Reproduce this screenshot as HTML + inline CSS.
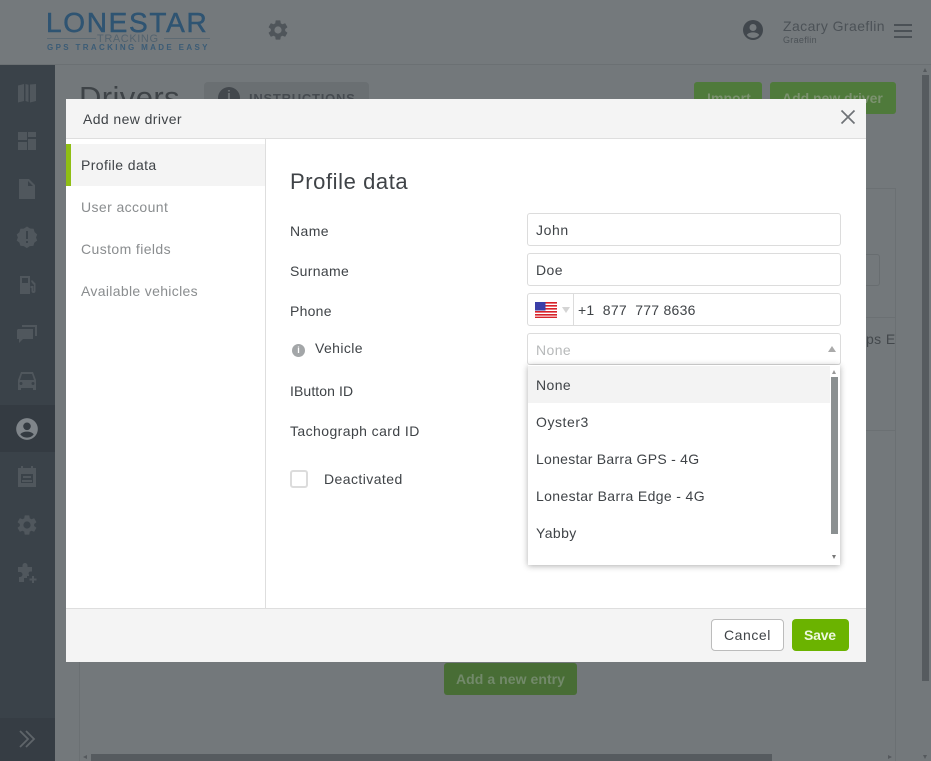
<!DOCTYPE html>
<html><head><meta charset="utf-8"><title>Add new driver</title>
<style>
*{box-sizing:border-box}
html,body{margin:0;padding:0;width:931px;height:761px;overflow:hidden;background:#73787b;font-family:"Liberation Sans",sans-serif;color:#3f4347}
.a{position:absolute}
.t{position:absolute;white-space:nowrap;font-size:14px;line-height:20px;letter-spacing:.4px}
.inp{position:absolute;left:527px;width:314px;height:33px;background:#fff;border:1px solid #dcdcdc;border-radius:3px}
svg{position:absolute;display:block}
.si{fill:#50575d}
</style></head><body>
<!-- background page -->
<div class="a" style="left:0;top:0;width:931px;height:65px;background:#74797c;border-bottom:1px solid #6b7073"></div>
<div class="t" style="left:46px;top:9px;font-size:28px;line-height:28px;letter-spacing:1.7px;color:#2f5472;-webkit-text-stroke:.5px #2f5472">LONESTAR</div>
<div class="a" style="left:47px;top:38px;width:49px;height:1px;background:#5d6a73"></div>
<div class="a" style="left:164px;top:38px;width:46px;height:1px;background:#5d6a73"></div>
<div class="t" style="left:97px;top:33px;font-size:11px;line-height:13px;letter-spacing:.6px;color:#53636f">TRACKING</div>
<div class="t" style="left:47px;top:43px;font-size:8px;line-height:9px;letter-spacing:2.35px;font-weight:bold;color:#3c5c76">GPS TRACKING MADE EASY</div>
<svg style="left:266px;top:18px" width="24" height="24" viewBox="0 0 24 24"><path fill="#4f555a" d="M19.14 12.94c.04-.3.06-.61.06-.94s-.02-.64-.07-.94l2.03-1.58a.49.49 0 0 0 .12-.61l-1.92-3.32a.49.49 0 0 0-.59-.22l-2.39.96a7 7 0 0 0-1.62-.94l-.36-2.54a.48.48 0 0 0-.48-.41h-3.84a.48.48 0 0 0-.47.41l-.36 2.54c-.59.24-1.13.57-1.62.94l-2.39-.96a.48.48 0 0 0-.59.22L2.73 8.87a.48.48 0 0 0 .12.61l2.03 1.58c-.05.3-.08.62-.08.94s.02.64.07.94l-2.03 1.58a.49.49 0 0 0-.12.61l1.92 3.32c.12.22.37.29.59.22l2.39-.96c.5.38 1.03.7 1.62.94l.36 2.54c.05.24.24.41.48.41h3.84c.24 0 .44-.17.47-.41l.36-2.54c.59-.24 1.13-.56 1.62-.94l2.39.96c.22.08.47 0 .59-.22l1.92-3.32a.48.48 0 0 0-.12-.61zM12 15.6a3.6 3.6 0 1 1 0-7.2 3.6 3.6 0 0 1 0 7.2z"/></svg>
<svg style="left:741px;top:18px" width="24" height="24" viewBox="0 0 24 24"><path fill="#41474d" d="M12 2a10 10 0 1 0 0 20 10 10 0 0 0 0-20zm0 4a3.5 3.5 0 1 1 0 7 3.5 3.5 0 0 1 0-7zm0 14a8 8 0 0 1-6.2-3c.8-1.7 3.700-2.600 6.200-2.600s5.400.9 6.200 2.600A8 8 0 0 1 12 20z"/></svg>
<div class="t" style="left:783px;top:16px;color:#4c5257;letter-spacing:.42px">Zacary Graeflin</div>
<div class="t" style="left:783px;top:34px;font-size:9px;line-height:12px;color:#4c5257;letter-spacing:.3px">Graeflin</div>
<div class="a" style="left:894px;top:24px;width:18px;height:2px;background:#4b5156"></div>
<div class="a" style="left:894px;top:30px;width:18px;height:2px;background:#4b5156"></div>
<div class="a" style="left:894px;top:36px;width:18px;height:2px;background:#4b5156"></div>

<div class="a" style="left:0;top:65px;width:55px;height:696px;background:#3a4249"></div>
<div class="a" style="left:0;top:405px;width:55px;height:47px;background:#343b42"></div>
<div class="a" style="left:0;top:718px;width:55px;height:43px;background:#363d44"></div>
<svg style="left:15px;top:81px" width="24" height="24" viewBox="0 0 24 24"><path class="si" d="M3 4.500 9 3v17l-6 1.500zM15 3.500l6-.5v17l-6 1.500zM10.500 3l3 .8v17.200l-3-1z"/></svg>
<svg style="left:15px;top:129px" width="24" height="24" viewBox="0 0 24 24"><path class="si" d="M3 3h9v8H3zM13 3h8v5h-8zM13 10h8v11h-8zM3 13h9v8H3z"/></svg>
<svg style="left:15px;top:177px" width="24" height="24" viewBox="0 0 24 24"><path class="si" d="M5 2h9l6 6v14H4V2zm8 2v5h5z" fill-rule="evenodd"/></svg>
<svg style="left:15px;top:225px" width="24" height="24" viewBox="0 0 24 24"><path class="si" fill-rule="evenodd" d="M12 1.500l3 2 3.600.2 1 3.400 2.600 2.400-1.200 3 1.200 3-2.900 2.200-.9 3.200-3.600.2-3 2-3-2-3.400-.3-1-3.200-2.700-2.100 1.200-3-1.200-3 2.700-2.300 1-3.400 3.400-.2zM11 6v8h2V6zm0 10v2h2v-2z"/></svg>
<svg style="left:15px;top:273px" width="24" height="24" viewBox="0 0 24 24"><path class="si" fill-rule="evenodd" d="M5 3h10v18H5zM7 5v5h6V5zM16 8l1-1 3.500 3.500V18a2 2 0 0 1-4 0v-3h-1v-2h3v5h.5v-6l-2-2z"/></svg>
<svg style="left:15px;top:321px" width="24" height="24" viewBox="0 0 24 24"><path class="si" d="M3 8h15v10H8l-4 4v-4H2V9zM7 4h15v11h-2V6H7z"/></svg>
<svg style="left:15px;top:369px" width="24" height="24" viewBox="0 0 24 24"><path class="si" fill-rule="evenodd" d="M6 3h12l3 8v10h-3v-2H6v2H3V11zM7 5l-2 6h14l-2-6zM6 13a1.500 1.500 0 1 0 0 3 1.500 1.500 0 0 0 0-3zm12 0a1.500 1.500 0 1 0 0 3 1.500 1.500 0 0 0 0-3z"/></svg>
<svg style="left:14px;top:416px" width="26" height="26" viewBox="0 0 24 24"><path fill="#7f858a" d="M12 2a10 10 0 1 0 0 20 10 10 0 0 0 0-20zm0 4a3.500 3.500 0 1 1 0 7 3.500 3.500 0 0 1 0-7zm0 14a8 8 0 0 1-6.200-3c.8-1.700 3.700-2.600 6.200-2.600s5.400.9 6.200 2.600A8 8 0 0 1 12 20z"/></svg>
<svg style="left:15px;top:465px" width="24" height="24" viewBox="0 0 24 24"><path class="si" fill-rule="evenodd" d="M6 1h2v2h8V1h2v2h3v19H3V3h3zM6 9v9h12V9zM8 11h8v2H8zM7 15h10v2H7z"/></svg>
<svg style="left:15px;top:513px" width="24" height="24" viewBox="0 0 24 24"><path class="si" d="M19.140 12.940c.04-.3.06-.61.06-.94s-.02-.64-.07-.94l2.030-1.580a.49.49 0 0 0 .12-.61l-1.920-3.320a.49.49 0 0 0-.59-.22l-2.390.96a7 7 0 0 0-1.620-.94l-.36-2.540a.48.48 0 0 0-.48-.41h-3.840a.48.48 0 0 0-.47.41l-.36 2.540c-.59.24-1.130.57-1.620.94l-2.390-.96a.48.48 0 0 0-.59.22L2.730 8.870a.48.48 0 0 0 .12.61l2.030 1.580c-.05.3-.08.62-.08.94s.02.64.07.94l-2.030 1.580a.49.49 0 0 0-.12.61l1.920 3.320c.12.22.37.29.59.22l2.390-.96c.5.38 1.030.7 1.620.94l.36 2.540c.05.24.24.41.48.41h3.840c.24 0 .44-.17.47-.41l.36-2.540c.59-.24 1.130-.56 1.620-.94l2.390.96c.22.08.47 0 .59-.22l1.920-3.320a.48.48 0 0 0-.12-.61zM12 15.600a3.600 3.600 0 1 1 0-7.200 3.600 3.600 0 0 1 0 7.200z"/></svg>
<svg style="left:15px;top:561px" width="24" height="24" viewBox="0 0 24 24"><path class="si" d="M10 2a2.500 2.500 0 0 1 2.500 2.500V6H17v4.500h-1.500a2 2 0 0 0-1.500 3.300V15h-2v2H9v4H4v-5h1a2.500 2.500 0 0 0 0-5H3V6h4.500V4.500A2.500 2.500 0 0 1 10 2zM17 15h2v2.500h2.500v2H19V22h-2v-2.500h-2.500v-2H17z"/></svg>
<svg style="left:18px;top:729px" width="20" height="20" viewBox="0 0 20 20"><path fill="none" stroke="#5f656a" stroke-width="1.800" d="M2 2l8 8-8 8M8 2l8 8-8 8"/></svg>

<div class="t" style="left:79px;top:78px;font-size:31px;line-height:40px;color:#3e4347">Drivers</div>
<div class="a" style="left:204px;top:82px;width:165px;height:30px;background:#6a6f72;border-radius:4px"></div>
<div class="a" style="left:218px;top:87px;width:22px;height:22px;border-radius:50%;background:#43484d;color:#6a6f72;font:bold 15px/20px 'Liberation Sans',sans-serif;text-align:center">i</div>
<div class="t" style="left:249px;top:89px;font-size:13px;font-weight:bold;color:#464b50;letter-spacing:.75px">INSTRUCTIONS</div>
<div class="a" style="left:694px;top:82px;width:68px;height:32px;background:#4f7a3b;border-radius:3px"></div>
<div class="a" style="left:770px;top:82px;width:126px;height:32px;background:#4f7a3b;border-radius:3px"></div>
<div class="t" style="left:707px;top:88px;color:#7c9270;font-weight:bold;letter-spacing:.05px">Import</div>
<div class="t" style="left:782px;top:88px;color:#7c9270;font-weight:bold;letter-spacing:-.02px">Add new driver</div>
<div class="a" style="left:79px;top:188px;width:817px;height:573px;border:1px solid #6b7073;border-bottom:0"></div>
<div class="a" style="left:866px;top:317px;width:30px;height:1px;background:#6b7073"></div>
<div class="a" style="left:866px;top:430px;width:30px;height:1px;background:#6b7073"></div>
<div class="a" style="left:866px;top:254px;width:14px;height:32px;border:1px solid #686d70;border-left:0;border-radius:0 3px 3px 0"></div>
<div class="t" style="left:866px;top:329px;color:#43484c;width:30px;overflow:hidden">ps Ec</div>
<div class="a" style="left:444px;top:663px;width:133px;height:32px;background:#486d35;border-radius:3px"></div>
<div class="t" style="left:456px;top:669px;color:#72896a;font-weight:bold;letter-spacing:.06px">Add a new entry</div>
<div class="a" style="left:922px;top:75px;width:7px;height:606px;background:#565b5f"></div>
<div class="a" style="left:923px;top:68px;width:0;height:0;border-left:2.500px solid transparent;border-right:2.500px solid transparent;border-bottom:4px solid #55595d"></div>
<div class="a" style="left:923px;top:755px;width:0;height:0;border-left:2.500px solid transparent;border-right:2.500px solid transparent;border-top:4px solid #55595d"></div>
<div class="a" style="left:91px;top:754px;width:681px;height:7px;background:#565b5f"></div>
<div class="a" style="left:83px;top:755px;width:0;height:0;border-top:2.500px solid transparent;border-bottom:2.500px solid transparent;border-right:4px solid #55595d"></div>
<div class="a" style="left:888px;top:755px;width:0;height:0;border-top:2.500px solid transparent;border-bottom:2.500px solid transparent;border-left:4px solid #55595d"></div>

<!-- modal -->
<div class="a" style="left:66px;top:99px;width:800px;height:563px;background:#fff"></div>
<div class="a" style="left:66px;top:99px;width:800px;height:40px;background:#f4f4f4;border-bottom:1px solid #dedede"></div>
<div class="t" style="left:83px;top:109px">Add new driver</div>
<svg style="left:840px;top:109px" width="16" height="16" viewBox="0 0 16 16"><path fill="none" stroke="#6e7276" stroke-width="1.700" d="M1.500 1.500l13 13M14.500 1.500l-13 13"/></svg>
<div class="a" style="left:265px;top:139px;width:1px;height:469px;background:#dedede"></div>
<div class="a" style="left:66px;top:144px;width:199px;height:42px;background:#f4f4f4"></div>
<div class="a" style="left:66px;top:144px;width:5px;height:42px;background:#8fbe14"></div>
<div class="t" style="left:81px;top:155px">Profile data</div>
<div class="t" style="left:81px;top:197px;color:#8a8d8f">User account</div>
<div class="t" style="left:81px;top:239px;color:#8a8d8f">Custom fields</div>
<div class="t" style="left:81px;top:281px;color:#8a8d8f;letter-spacing:.33px">Available vehicles</div>

<div class="t" style="left:290px;top:168px;font-size:22px;line-height:28px;letter-spacing:.58px">Profile data</div>
<div class="t" style="left:290px;top:221px">Name</div>
<div class="t" style="left:290px;top:261px;letter-spacing:.32px">Surname</div>
<div class="t" style="left:290px;top:301px;letter-spacing:.25px">Phone</div>
<div class="a" style="left:292px;top:344px;width:13px;height:13px;border-radius:50%;background:#a3a6a8;color:#fff;font:bold 9px/13px 'Liberation Sans',sans-serif;text-align:center">i</div>
<div class="t" style="left:315px;top:338px">Vehicle</div>
<div class="t" style="left:290px;top:381px;letter-spacing:.1px">IButton ID</div>
<div class="t" style="left:290px;top:421px;letter-spacing:.42px">Tachograph card ID</div>
<div class="a" style="left:290px;top:470px;width:18px;height:18px;border:2px solid #dcdcdc;border-radius:3px;background:#fff"></div>
<div class="t" style="left:324px;top:469px;letter-spacing:.43px">Deactivated</div>

<div class="inp" style="top:213px"></div><div class="t" style="left:536px;top:220px;letter-spacing:.6px">John</div>
<div class="inp" style="top:253px"></div><div class="t" style="left:536px;top:260px">Doe</div>
<div class="inp" style="top:293px"></div>
<div class="a" style="left:573px;top:294px;width:1px;height:31px;background:#dcdcdc"></div>
<svg style="left:535px;top:302px" width="22" height="16" viewBox="0 0 22 16"><rect width="22" height="16" fill="#fff"/><path fill="#d8232a" d="M0 0h22v1.600H0zM0 3h22v1.600H0zM0 6h22v1.600H0zM0 9h22v1.600H0zM0 12h22v1.600H0zM0 14.600h22V16H0z"/><rect width="10.500" height="8.500" fill="#3b3fa8"/></svg>
<div class="a" style="left:562px;top:307px;width:0;height:0;border-left:4px solid transparent;border-right:4px solid transparent;border-top:6px solid #d4d4d4"></div>
<div class="t" style="left:578px;top:300px;letter-spacing:.26px">+1&nbsp; 877&nbsp; 777 8636</div>
<div class="inp" style="top:333px;height:32px"></div>
<div class="t" style="left:536px;top:340px;color:#b7b9ba">None</div>
<div class="a" style="left:828px;top:346px;width:0;height:0;border-left:4px solid transparent;border-right:4px solid transparent;border-bottom:6px solid #aaa"></div>

<!-- dropdown -->
<div class="a" style="left:528px;top:365px;width:312px;height:200px;background:#fff;box-shadow:0 1px 6px rgba(0,0,0,.32)"></div>
<div class="a" style="left:528px;top:366px;width:302px;height:37px;background:#f3f3f3"></div>
<div class="t" style="left:536px;top:375px">None</div>
<div class="t" style="left:536px;top:412px;letter-spacing:.55px">Oyster3</div>
<div class="t" style="left:536px;top:449px;letter-spacing:.27px">Lonestar Barra GPS - 4G</div>
<div class="t" style="left:536px;top:486px;letter-spacing:.36px">Lonestar Barra Edge - 4G</div>
<div class="t" style="left:536px;top:523px">Yabby</div>
<div class="a" style="left:831px;top:377px;width:7px;height:157px;background:#8b9091"></div>
<div class="a" style="left:832px;top:370px;width:0;height:0;border-left:2.500px solid transparent;border-right:2.500px solid transparent;border-bottom:4px solid #999"></div>
<div class="a" style="left:832px;top:555px;width:0;height:0;border-left:2.500px solid transparent;border-right:2.500px solid transparent;border-top:4px solid #777"></div>

<!-- footer -->
<div class="a" style="left:66px;top:608px;width:800px;height:54px;background:#f4f4f4;border-top:1px solid #dedede"></div>
<div class="a" style="left:711px;top:619px;width:73px;height:32px;background:#fff;border:1px solid #bcbcbc;border-radius:4px"></div>
<div class="t" style="left:724px;top:625px;letter-spacing:.55px">Cancel</div>
<div class="a" style="left:792px;top:619px;width:57px;height:32px;background:#6bb300;border-radius:4px"></div>
<div class="t" style="left:804px;top:625px;color:#eef8df;font-weight:bold;letter-spacing:-.2px">Save</div>
</body></html>
